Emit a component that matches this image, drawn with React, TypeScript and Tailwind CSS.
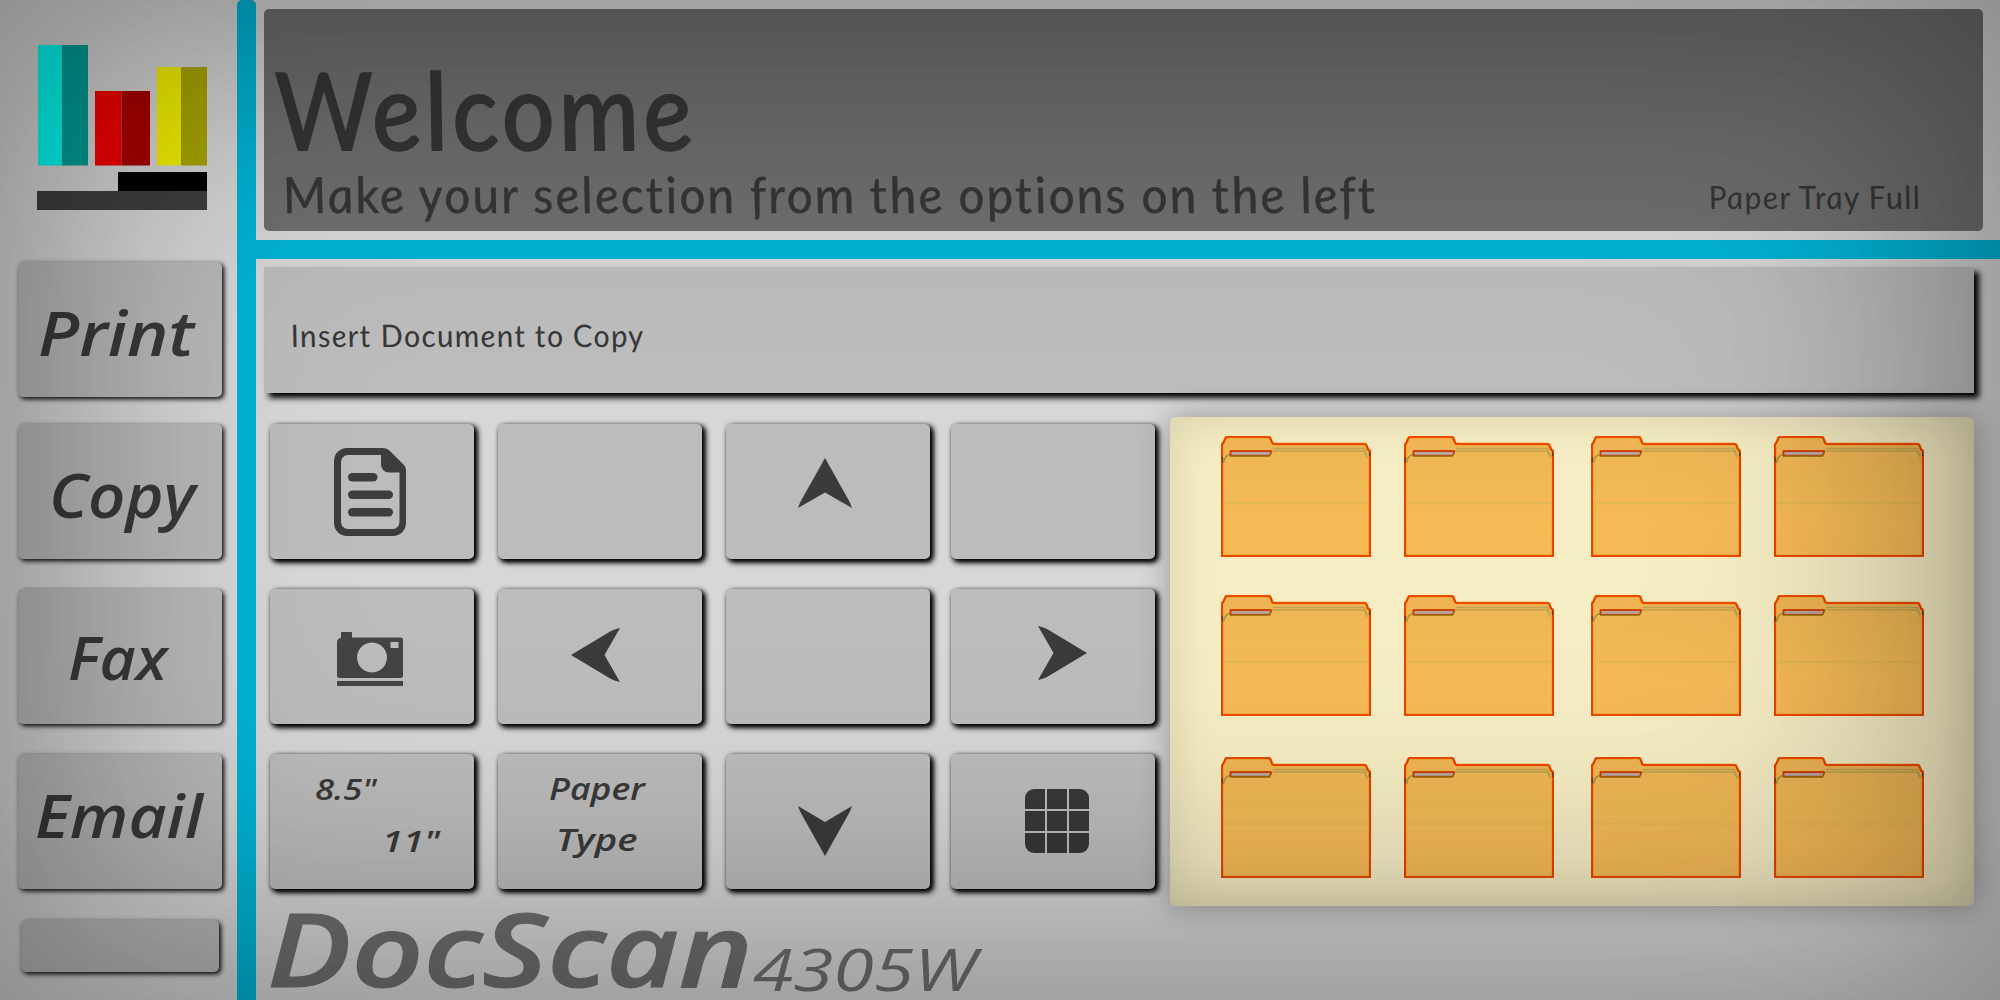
import { useLayoutEffect, useRef, useState } from "react";
import type { ReactNode } from "react";

/* Text stretched or squeezed horizontally to a fixed width. */
function FitText({
  text,
  width,
  upright = false,
  className = "",
}: {
  text: string;
  width: number;
  upright?: boolean;
  className?: string;
}) {
  const ref = useRef<HTMLSpanElement>(null);
  const [scale, setScale] = useState(1);
  useLayoutEffect(() => {
    if (ref.current) setScale(width / ref.current.offsetWidth);
  }, [width, text]);
  return (
    <span className="block leading-none" style={{ width }}>
      <span
        ref={ref}
        className={`inline-block origin-[0_88.8%] whitespace-nowrap align-top italic leading-none [font-variant-ligatures:none] [stroke-linejoin:round] ${
          upright ? "font-['Lato',sans-serif] tracking-[0.04em]" : "font-['Open_Sans',sans-serif]"
        } ${className}`}
        style={{ transform: `scaleX(${scale})${upright ? " skewX(8deg)" : ""}` }}
      >
        {text}
      </span>
    </span>
  );
}

function SideButton({ className, children }: { className: string; children?: ReactNode }) {
  return (
    <button
      className={`block shrink-0 rounded-[5px] bg-[#bababa] text-left text-[#3a3a3a] shadow-[2px_2px_5px_#000] ${className}`}
    >
      {children}
    </button>
  );
}

function Key({ className = "", children }: { className?: string; children?: ReactNode }) {
  return (
    <button
      className={`block h-[135px] w-[204px] rounded-[5px] bg-[#bcbcbc] text-left text-[#3a3a3a] shadow-[2px_2px_5px_#000,3px_3px_6px_#000] ${className}`}
    >
      {children}
    </button>
  );
}

function Logo() {
  return (
    <svg className="ml-[37px] mt-[45px] block h-[165px] w-[170px] shrink-0" viewBox="0 0 170 165">
      <rect x="1" y="0" width="24" height="120.5" fill="#00fbf1" />
      <rect x="25" y="0" width="26" height="120.5" fill="#009f98" />
      <rect x="58" y="46" width="26.500" height="74.500" fill="#f60000" />
      <rect x="84.500" y="46" width="28.500" height="74.500" fill="#ac0000" />
      <rect x="120" y="22" width="24" height="98.500" fill="#f5f300" />
      <rect x="144" y="22" width="26" height="98.500" fill="#aba700" />
      <rect x="81" y="127" width="89" height="19" fill="#000" />
      <rect x="0" y="146" width="170" height="19" fill="#3f3f3f" />
    </svg>
  );
}

function DocIcon() {
  return (
    <svg className="ml-[64px] mt-[24px] h-[88px] w-[72px]" viewBox="0 0 72 88" fill="#3d3d3d">
      <path
        fillRule="evenodd"
        d="M13 0H49Q53 0 56 3L70 17Q72 19 72 22V75A13 13 0 0 1 59 88H13A13 13 0 0 1 0 75V13A13 13 0 0 1 13 0ZM14 7A7 7 0 0 0 7 14V74A7 7 0 0 0 14 81H58A7 7 0 0 0 65.500 74V24.500H55A8 8 0 0 1 47 16V7Z"
      />
      <rect x="14" y="25" width="29.500" height="8.500" rx="4.200" />
      <rect x="14" y="42.500" width="45" height="8.500" rx="4.200" />
      <rect x="14" y="60" width="45" height="8.500" rx="4.200" />
    </svg>
  );
}

function CameraIcon() {
  return (
    <svg className="ml-[67px] mt-[43px] h-[54px] w-[66px]" viewBox="0 0 66 54" fill="#444">
      <path
        fillRule="evenodd"
        d="M4 1Q4 0 5 0H14Q15 0 15 1V5.500H64Q66 5.500 66 8V43.500Q66 46 63.500 46H2.500Q0 46 0 43.500V9Q1 6.500 4 5.500ZM35 10.500a15 15 0 1 0 0.010 0ZM53.500 10V16H61.500V10Z"
      />
      <rect x="0" y="49" width="66" height="5" />
    </svg>
  );
}

function Arrow({ className, d, box }: { className: string; d: string; box: string }) {
  return (
    <svg className={className} viewBox={box} fill="#3b3b3b">
      <path d={d} />
    </svg>
  );
}

function GridIcon() {
  return (
    <div className="ml-[74px] mt-[34px] grid h-[64px] w-[64px] grid-cols-3 gap-[2px] overflow-hidden rounded-[9px]">
      {Array.from({ length: 9 }, (_, i) => (
        <span key={i} className="bg-[#383838]" />
      ))}
    </div>
  );
}

function Folder() {
  return (
    <svg className="block h-[121px] w-[150px]" viewBox="0 0 150 121" fill="none">
      <defs>
        <linearGradient id="folderFill" x1="0" y1="0" x2="0" y2="1">
          <stop offset="0" stopColor="#efb455" />
          <stop offset="0.400" stopColor="#efb954" />
          <stop offset="0.700" stopColor="#f6ba57" />
          <stop offset="1" stopColor="#f5b956" />
        </linearGradient>
      </defs>
      <path
        d="M1 120V8.500L2.500 6.500L4.500 2Q5 1 6 1H47.500Q49 1 49.500 2.500L51 6.500Q51.500 8 53 8H143.500Q145 8 145.500 9.500L147 13.500L149 15V120Z"
        fill="url(#folderFill)"
        stroke="#ee8800"
        strokeWidth="2.600"
        strokeLinejoin="round"
      />
      <path d="M52 12.500H143.500L146 20" stroke="#bba252" strokeWidth="1.300" />
      <path d="M50 15H143L146.500 22" stroke="#c0a350" strokeWidth="1.300" />
      <path d="M2.500 27Q3.500 19.500 9 18.500" stroke="#a2903f" strokeWidth="1.500" />
      <path d="M2 67H148" stroke="#dfb757" strokeWidth="1.500" />
      <path
        d="M9.500 20V15.200H50V16.500L48.500 20Z"
        fill="#b9a5a2"
        stroke="#8a6a00"
        strokeWidth="1.600"
        strokeLinejoin="round"
      />
      <path d="M9.500 20V15H50L49.500 17.500" stroke="#dd3000" strokeWidth="1.400" strokeLinejoin="round" />
      <path d="M10 19.300H48.500" stroke="#bb4800" strokeWidth="0.800" />
      <path
        d="M1 120V8.500L2.500 6.500L4.500 2Q5 1 6 1H47.500Q49 1 49.500 2.500L51 6.500Q51.500 8 53 8H143.500Q145 8 145.500 9.500L147 13.500L149 15V120Z"
        stroke="#ec3600"
        strokeWidth="1.700"
        strokeLinejoin="round"
      />
      <path d="M1.200 21V26M148.600 16V20" stroke="#6b3a15" strokeWidth="1.400" />
    </svg>
  );
}

export default function App() {
  return (
    <div className="relative flex h-[1000px] w-[2000px] overflow-hidden bg-[#d7d7d7]">
      <aside className="flex w-[237px] shrink-0 flex-col">
        <Logo />
        <SideButton className="ml-[18px] mt-[52px] h-[135px] w-[204px] pl-[20px] pt-[5px]">
          <FitText text="Print" width={156} className="text-[61px] font-semibold" />
        </SideButton>
        <SideButton className="ml-[18px] mt-[27px] h-[135px] w-[204px] pl-[31px] pt-[4px]">
          <FitText text="Copy" width={147} className="text-[62px] font-semibold" />
        </SideButton>
        <SideButton className="ml-[18px] mt-[30px] h-[135px] w-[204px] pl-[50px]">
          <FitText text="Fax" width={99} className="text-[60px] font-semibold" />
        </SideButton>
        <SideButton className="ml-[18px] mt-[30px] h-[135px] w-[204px] pb-[13px] pl-[17px]">
          <FitText text="Email" width={168} className="text-[60px] font-semibold" />
        </SideButton>
        <SideButton className="ml-[21px] mt-[31px] h-[52px] w-[198px]" />
      </aside>

      <div className="w-[19px] shrink-0 rounded-t-[5px] bg-[#00b4d6]" />

      <main className="flex flex-1 flex-col">
        <header className="ml-[8px] mt-[9px] h-[222px] w-[1719px] shrink-0 rounded-[5px] bg-[#6f6f6f] text-[#363636]">
          <div className="pl-[16px] pt-[46px]">
            <FitText
              text="Welcome"
              width={420}
              upright
              className="text-[107px] [-webkit-text-stroke:2px_#363636]"
            />
          </div>
          <div className="flex items-start pl-[21px] pt-[7px]">
            <FitText
              text="Make your selection from the options on the left"
              width={1095}
              upright
              className="text-[50px] [-webkit-text-stroke:0.4px_#363636]"
            />
            <div className="pl-[330px] pt-[12px]">
              <FitText text="Paper Tray Full" width={213} upright className="text-[32px]" />
            </div>
          </div>
        </header>

        <div className="mt-[9px] h-[19px] shrink-0 bg-[#00b4d6]" />

        <section className="ml-[8px] mt-[8px] h-[126px] w-[1710px] shrink-0 bg-[#bcbcbc] pl-[28px] pt-[53px] text-[#383838] shadow-[5px_5px_6px_#000]">
          <FitText text="Insert Document to Copy" width={354} upright className="text-[31px]" />
        </section>

        <div className="mt-[24px] flex items-start">
          <section className="ml-[14px] mt-[7px] grid shrink-0 grid-cols-[228px_228px_225px_204px] gap-y-[30px]">
            <Key>
              <div className="h-[135px]">
                <DocIcon />
              </div>
            </Key>
            <Key />
            <Key>
              <div className="h-[135px] pl-[72px] pt-[34px]">
                <Arrow
                  className="h-[50px] w-[54px]"
                  box="0 0 54 50"
                  d="M27 0L50 41Q52 44 54 50L27 34.500L0 50Q2 44 4 41Z"
                />
              </div>
            </Key>
            <Key />
            <Key>
              <div className="h-[135px]">
                <CameraIcon />
              </div>
            </Key>
            <Key>
              <div className="h-[135px] pl-[73px] pt-[39px]">
                <Arrow
                  className="h-[54px] w-[49px]"
                  box="0 0 49 54"
                  d="M0 27L40 3Q44 1 49 0L33.500 27L49 54Q44 53 40 51Z"
                />
              </div>
            </Key>
            <Key />
            <Key>
              <div className="h-[135px] pl-[87px] pt-[37px]">
                <Arrow
                  className="h-[54px] w-[49px]"
                  box="0 0 49 54"
                  d="M49 27L9 3Q5 1 0 0L15.500 27L0 54Q5 53 9 51Z"
                />
              </div>
            </Key>
            <Key>
              <div className="flex h-[135px] flex-col gap-[23px] pt-[20px]">
                <div className="pl-[45px]">
                  <FitText text={'8.5"'} width={62} className="text-[29px] font-semibold" />
                </div>
                <div className="pl-[112px]">
                  <FitText text={'11"'} width={58} className="text-[29px] font-semibold" />
                </div>
              </div>
            </Key>
            <Key>
              <div className="flex h-[135px] flex-col gap-[21px] pt-[20px]">
                <div className="pl-[51px]">
                  <FitText text="Paper" width={96} className="text-[30px] font-semibold" />
                </div>
                <div className="pl-[58px]">
                  <FitText text="Type" width={82} className="text-[30px] font-semibold" />
                </div>
              </div>
            </Key>
            <Key>
              <div className="h-[135px] pl-[72px] pt-[52px]">
                <Arrow
                  className="h-[50px] w-[54px]"
                  box="0 0 54 50"
                  d="M27 50L50 9Q52 6 54 0L27 16L0 0Q2 6 4 9Z"
                />
              </div>
            </Key>
            <Key>
              <div className="h-[135px] pt-px">
                <GridIcon />
              </div>
            </Key>
          </section>

          <section className="ml-[15px] h-[489px] w-[804px] shrink-0 rounded-[5px] bg-[#f6edc4] pl-[51px] pt-[19px] shadow-[0_0_30px_rgba(0,0,0,0.3),inset_0_0_50px_rgba(0,0,0,0.13)]">
            <div className="grid grid-cols-[183px_187px_183px_150px] grid-rows-[159px_162px_121px]">
              {Array.from({ length: 12 }, (_, i) => (
                <Folder key={i} />
              ))}
            </div>
          </section>
        </div>

        <footer className="-mt-[8px] flex items-start pl-[11px] text-[#6f6f6f]">
          <FitText
            text="DocScan"
            width={486}
            className="text-[101px] font-semibold [-webkit-text-stroke:1px_#6f6f6f]"
          />
          <div className="pt-[42px]">
            <FitText text="4305W" width={223} className="text-[58px] font-medium" />
          </div>
        </footer>
      </main>

      <div className="pointer-events-none absolute inset-0 shadow-[inset_0_0_300px_rgba(0,0,0,0.27),inset_0_0_300px_110px_rgba(0,0,0,0.16)]" />
    </div>
  );
}
